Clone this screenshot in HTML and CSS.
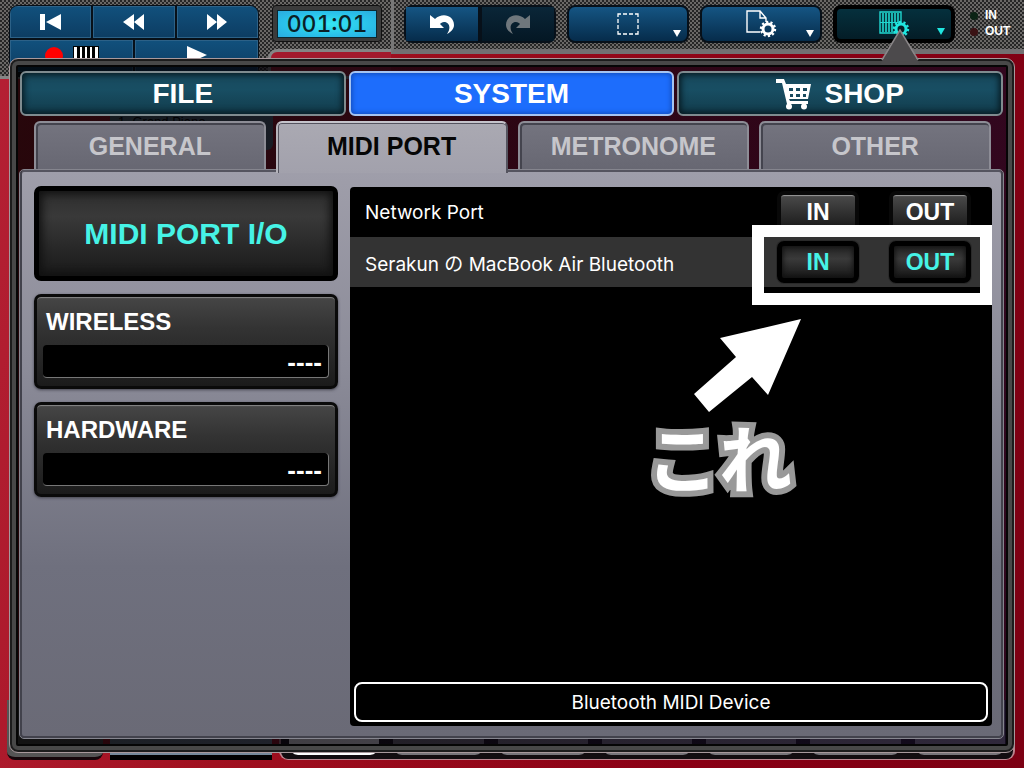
FILE: index.html
```html
<!DOCTYPE html>
<html lang="en">
<head>
<meta charset="utf-8">
<title>System – MIDI Port</title>
<link rel="stylesheet" href="styles.css">
</head>
<body>
<div class="app">
  <header class="topbar">
    <div class="deck deck-left">
      <div class="transport">
        <div class="transport-row">
          <button class="key" aria-label="Return to start"><svg width="22" height="18" viewBox="0 0 22 18"><path fill="#fff" d="M0 1h5v16H0zM21 1v16L6 9z"/></svg></button>
          <button class="key" aria-label="Rewind"><svg width="22" height="18" viewBox="0 0 22 18"><path fill="#fff" d="M11 1v16L0 9zM21 1v16L11 9z"/></svg></button>
          <button class="key" aria-label="Fast forward"><svg width="22" height="18" viewBox="0 0 22 18"><path fill="#fff" d="M1 1v16l10-8zM11 1v16l10-8z"/></svg></button>
        </div>
        <div class="transport-row">
          <button class="key" aria-label="Record"><svg width="54" height="20" viewBox="0 0 54 20"><circle cx="9" cy="10" r="9" fill="#f00"/><path fill="#000" d="M28 0h26v20H28z"/><path fill="#fff" d="M29 1h3v12h1v7h-4zM35 1h2v12h1v7h-4v-7h1zM40 1h2v12h1v7h-4v-7h1zM45 1h2v12h1v7h-4v-7h1zM50 1h3v19h-4v-7h1z"/></svg></button>
          <button class="key" aria-label="Play"><svg width="20" height="20" viewBox="0 0 20 20"><path fill="#fff" d="M0 0l20 9-20 9z"/></svg></button>
        </div>
      </div>
      <div class="counter-column">
        <div class="counter"><output class="counter-value">001:01</output></div>
        <div class="body-corner"></div>
      </div>
    </div>
    <div class="deck deck-right">
      <div class="history">
        <button class="tool" aria-label="Undo"><svg width="26" height="22" viewBox="0 0 26 22"><path fill="#fff" d="M1 2l5 4c7-7 19-4 19 6 0 4-3 7-7 9 4-5 3-12-3-12-2 0-3 1-4 2l4 4H1z"/></svg></button>
        <button class="tool tool-off" aria-label="Redo" disabled><svg width="26" height="22" viewBox="0 0 26 22"><path fill="#6f777c" d="M25 2l-5 4C13-1 1 2 1 12c0 4 3 7 7 9-4-5-3-12 3-12 2 0 3 1 4 2l-4 4h14z"/></svg></button>
      </div>
      <button class="tool tool-menu" aria-label="Selection">
        <svg width="24" height="24" viewBox="0 0 24 24"><path d="M2 5V2h3M19 2h3v3M22 19v3h-3M5 22H2v-3M7 2h4M13 2h4M7 22h4M13 22h4M2 7v4M2 13v4M22 7v4M22 13v4" fill="none" stroke="#fff" stroke-width="1.3"/></svg>
        <span class="caret"></span>
      </button>
      <button class="tool tool-menu" aria-label="Document settings">
        <svg width="32" height="30" viewBox="0 0 32 30"><path d="M15 23H2V2h13l6 7v4M15 2v7h6" fill="none" stroke="#fff" stroke-width="1.4"/><circle cx="23" cy="20" r="5" fill="none" stroke="#fff" stroke-width="3"/><circle cx="23" cy="20" r="7" fill="none" stroke="#fff" stroke-width="2.4" stroke-dasharray="2.2 2.2"/></svg>
        <span class="caret"></span>
      </button>
      <button class="tool tool-menu tool-active" aria-label="System settings" aria-expanded="true">
        <svg width="32" height="30" viewBox="0 0 32 30"><path d="M2 3h21v21H2z" fill="#06303a" stroke="#20d6d0" stroke-width="1.4"/><path d="M5 4v9M8 4v9M11 4v9M14 4v9M17 4v9M20 4v9M5 14v9M8 14v9M11 14v9M14 14v9" stroke="#20d6d0" stroke-width="1.6"/><path d="M2 13.500h21" stroke="#20d6d0"/><circle cx="23" cy="20" r="5" fill="#062028" stroke="#20e6e0" stroke-width="3"/><circle cx="23" cy="20" r="7" fill="none" stroke="#20e6e0" stroke-width="2.4" stroke-dasharray="2.2 2.2"/></svg>
        <span class="caret"></span>
      </button>
      <ul class="lamps">
        <li class="lamp lamp-in">IN</li>
        <li class="lamp lamp-out">OUT</li>
      </ul>
    </div>
  </header>

  <div class="stage"><div class="part">1&nbsp; Grand Piano</div></div>
  <div class="keybed">
    <div class="wheel"></div>
    <div class="pad"></div>
    <div class="keys"><i class="ivory"></i><i></i><i></i><i></i><i></i><i></i><i></i></div>
  </div>

  <section class="popover" aria-label="System settings">
    <svg class="pointer" width="40" height="36" viewBox="0 0 40 36"><path d="M0 36L20 1l20 35z" fill="#4c4a4c"/><path d="M2 31L20 1l18 30" fill="none" stroke="#8a8688" stroke-width="1.500"/></svg>
    <nav class="segments">
      <button class="segment">FILE</button>
      <button class="segment segment-on">SYSTEM</button>
      <button class="segment"><svg width="36" height="32" viewBox="0 0 36 32"><path d="M0 1h8l2 5h25l-3 15H13l1 2h18v3H11L6 5H0z" fill="#fff"/><path d="M13 10h4v3h-4zM20 10h4v3h-4zM27 10h4v3h-4zM14 16h3v3h-3zM20 16h4v3h-4zM27 16h3v3h-3z" fill="#194a5e"/><circle cx="13" cy="28.500" r="3" fill="#fff"/><circle cx="28" cy="28.500" r="3" fill="#fff"/></svg>SHOP</button>
    </nav>
    <div class="tabs" role="tablist">
      <button class="tab" role="tab">GENERAL</button>
      <button class="tab tab-on" role="tab" aria-selected="true">MIDI PORT</button>
      <button class="tab" role="tab">METRONOME</button>
      <button class="tab" role="tab">OTHER</button>
    </div>
    <div class="panel" role="tabpanel">
      <div class="side">
        <button class="block block-on">MIDI PORT I/O</button>
        <button class="block block-field"><span class="block-name">WIRELESS</span><span class="block-value">----</span></button>
        <button class="block block-field"><span class="block-name">HARDWARE</span><span class="block-value">----</span></button>
      </div>
      <div class="ports">
        <div class="port">
          <span class="port-name">Network Port</span>
          <button class="switch" aria-pressed="false">IN</button>
          <button class="switch" aria-pressed="false">OUT</button>
        </div>
        <div class="port port-alt">
          <span class="port-name">Serakun の MacBook Air Bluetooth</span>
          <button class="switch" aria-pressed="true">IN</button>
          <button class="switch" aria-pressed="true">OUT</button>
        </div>
        <button class="device">Bluetooth MIDI Device</button>
        <div class="callout-frame"></div>
        <div class="callout">
          <svg width="108" height="94" viewBox="0 0 108 94"><path d="M108 0L27 19l16 19L1 75l15 18 43-35 16 18z" fill="#fff"/></svg>
          <span class="callout-text" lang="ja">これ</span>
        </div>
      </div>
    </div>
  </section>
</div>
</body>
</html>
```
FILE: styles.css
```css
* { box-sizing: border-box; }

body {
  margin: 0;
  font-family: "Liberation Sans", Arial, sans-serif;
  color: #fff;
}

button {
  margin: 0;
  padding: 0;
  border: 0;
  font: inherit;
  color: inherit;
  background: none;
}

svg { display: block; }

.app {
  position: relative;
  display: flex;
  flex-direction: column;
  min-height: 100vh;
  overflow: hidden;
  background: linear-gradient(100deg, #b52034 0, #a0101f 30%, #8a0015 70%, #7c0013 100%);
}

/* Top bar */
.topbar {
  display: flex;
  align-items: flex-start;
  height: 80px;
}

.deck {
  display: flex;
  background-color: #6a6866;
  background-image:
    radial-gradient(circle at 1px 1px, #262626 1px, transparent 1px),
    radial-gradient(circle at 3px 3px, #262626 1px, transparent 1px);
  background-size: 4px 4px;
}

.deck-left {
  flex: none;
  width: 391px;
  height: 79px;
  padding: 5px 0 0 9px;
  gap: 9px;
  border-bottom: 3px solid #858585;
}

.transport {
  display: flex;
  flex-direction: column;
  gap: 2px;
  width: 250px;
  height: 72px;
  border: 1px solid #071019;
  border-radius: 9px;
  overflow: hidden;
  background: #071019;
}

.transport-row {
  display: flex;
  gap: 2px;
  height: 32px;
}

.key {
  display: flex;
  flex: 1;
  align-items: center;
  justify-content: center;
  border: 1px solid #2c6187;
  background: linear-gradient(#11507c, #0d3d63);
}

.counter-column {
  display: flex;
  flex: 1;
  flex-direction: column;
  gap: 7px;
}

.counter {
  height: 37px;
  margin: 0 9px 0 4px;
  padding: 4px;
  border: 1px solid #111;
  border-radius: 4px;
  background: #3b3b3b;
}

.counter-value {
  display: block;
  height: 28px;
  border: 1px solid #0b2730;
  background: radial-gradient(ellipse at center, #35e9f2 0, #2ac2ea 60%, #2babdf 100%);
  color: #0b1f26;
  font: 500 23px/27px Inter, sans-serif;
  font-variant-numeric: tabular-nums;
  text-align: center;
}

.body-corner {
  flex: 1;
  border: solid #858585;
  border-width: 3px 0 0 3px;
  border-radius: 9px 0 0 0;
  background: #a31a2d;
}

.deck-right {
  flex: 1;
  align-items: flex-start;
  gap: 11px;
  height: 54px;
  padding: 5px 0 0 10px;
  border-left: 3px solid #777;
  border-bottom: 5px solid #727072;
}

.history {
  display: flex;
  width: 152px;
  border-radius: 8px;
  overflow: hidden;
}

.tool {
  position: relative;
  display: flex;
  flex: 1;
  align-items: center;
  justify-content: center;
  height: 38px;
  border: 2px solid #071019;
  background: linear-gradient(#155583, #062c4b);
}

.tool-off { background: linear-gradient(#0a2638, #041724); }

.tool-menu {
  flex: none;
  width: 122px;
  border-radius: 8px;
}

.tool-active {
  border: 4px solid #000;
  background: linear-gradient(#05303d, #041d27);
  color: #20e6e0;
}

.caret {
  position: absolute;
  right: 6px;
  bottom: 4px;
  border: solid transparent;
  border-width: 7px 4px 0;
  border-top-color: currentColor;
}

.lamps {
  display: flex;
  flex-direction: column;
  gap: 1px;
  margin: 3px 0 0 4px;
  padding: 0;
  list-style: none;
}

.lamp {
  display: flex;
  align-items: center;
  gap: 7px;
  font-size: 12px;
  font-weight: bold;
  line-height: 15px;
}

.lamp::before {
  content: "";
  width: 8px;
  height: 8px;
  border-radius: 50%;
  background: #0c2415;
}

.lamp-out::before { background: #3a1214; }

/* Instrument face behind the popover */
.stage {
  display: flex;
  flex: 1;
  padding: 0 0 0 110px;
}

.part {
  width: 163px;
  height: 70px;
  padding: 34px 8px 0;
  border-radius: 0 0 6px 0;
  background: #55707f;
  color: #000;
  font-size: 13px;
  line-height: 16px;
}

.keybed {
  display: flex;
  gap: 7px;
  height: 60px;
  margin: 0 9px 8px 7px;
}

.wheel {
  width: 96px;
  height: 60px;
  border-radius: 0 0 8px 8px;
  border-bottom: 3px solid #16060a;
  background: #555;
}

.pad {
  width: 162px;
  border-bottom: 5px solid #000;
  background: #75889a;
}

.keys {
  display: flex;
  flex: 1;
  gap: 14px;
  padding: 0 8px 4px;
  border: solid #b9868f;
  border-width: 0 2px 1px;
  border-radius: 0 0 9px 9px;
  background: #120d10;
}

.keys i {
  flex: 1;
  border-radius: 0 0 9px 9px;
  background: #77757a;
}

.keys .ivory { background: #fff; }

/* Popover */
.popover {
  position: absolute;
  inset: 58px 9px 15px 9px;
  display: flex;
  flex-direction: column;
  padding: 12px 11px 14px 10px;
  border: 1px solid #a8999c;
  border-radius: 9px;
  background: linear-gradient(90deg, rgba(0, 0, 0, .78), rgba(20, 10, 35, .72));
  box-shadow:
    inset 0 0 0 2px #1c1c1c,
    inset 0 0 0 6px #484848,
    inset 0 0 0 8px #050505;
}

.pointer {
  position: absolute;
  top: -30px;
  right: 94px;
}

.segments {
  display: grid;
  grid-template-columns: repeat(3, 1fr);
  gap: 3px;
}

.segment {
  display: flex;
  align-items: center;
  justify-content: center;
  gap: 12px;
  height: 45px;
  border: 2px solid #7f8b8f;
  border-radius: 6px;
  background: linear-gradient(#18495d, #184e63 40%, #123c4c);
  box-shadow: inset 0 0 6px 2px #06181f;
  font-size: 28px;
  font-weight: bold;
}

.segment-on {
  border-color: #a5c4f2;
  background: #1d6dfc;
  box-shadow: inset 0 0 5px 1px #134bb8;
}

.tabs {
  display: grid;
  grid-template-columns: repeat(4, 1fr);
  gap: 10px;
  margin-top: 5px;
  padding: 0 12px 0 14px;
}

.tab {
  height: 49px;
  border: 2px solid #8d8d96;
  border-bottom: 0;
  border-radius: 6px 6px 0 0;
  background: linear-gradient(#74747f, #676772);
  box-shadow: inset 1px 1px 0 1px #44444e;
  color: #c6c6cb;
  font-size: 25px;
  font-weight: bold;
}

.tab-on {
  z-index: 1;
  height: 52px;
  margin-bottom: -3px;
  padding-bottom: 3px;
  border-color: #c5c4cb #55545f #c5c4cb #b5b4bb;
  background: linear-gradient(#aaa9b2, #a2a1ac);
  box-shadow: inset 0 2px 0 -1px #55545f, inset 1px 0 0 #55545f;
  color: #060606;
}

.panel {
  display: grid;
  flex: 1;
  grid-template-columns: 304fr 642fr;
  gap: 12px;
  padding: 14px 9px 10px 12px;
  border: 2px solid #42424c;
  border-top-color: #55545f;
  border-radius: 4px;
  outline: 1px solid #85858e;
  background: linear-gradient(#9f9eaa, #8b8b98 35%, #6f707e 70%, #6a6a76);
}

.side {
  display: flex;
  flex-direction: column;
  gap: 13px;
}

.block {
  height: 95px;
  border: 3px solid #0a0a0a;
  border-radius: 7px;
  background: linear-gradient(#464646, #333 35%, #1b1b1b);
  box-shadow: 0 1px 3px #44444f, inset 0 2px 1px -1px #888;
  font-weight: bold;
}

.block-on {
  border-width: 5px;
  border-color: #000;
  background: linear-gradient(#2e2e2e, #393939 30%, #191919);
  box-shadow: inset 0 0 9px 3px #111;
  color: #46f3e6;
  font-size: 30px;
}

.block-field {
  display: flex;
  flex-direction: column;
  justify-content: space-between;
  padding: 12px 6px 8px;
  text-align: left;
}

.block-name {
  padding-left: 3px;
  font-size: 24px;
  line-height: 26px;
}

.block-value {
  height: 33px;
  padding: 0 6px;
  border: solid #777;
  border-width: 0 1px 1px 0;
  border-radius: 4px;
  background: #000;
  font-size: 26px;
  line-height: 34px;
  text-align: right;
}

.ports {
  position: relative;
  display: flex;
  flex-direction: column;
  margin-top: 1px;
  border-radius: 4px;
  background: #000;
  font-family: Inter, "Noto Sans CJK JP", sans-serif;
  font-size: 19px;
}

.port {
  display: flex;
  align-items: center;
  gap: 30px;
  height: 50px;
  padding: 0 21px 0 15px;
}

.port-alt { background: #333; }

.port-name { flex: 1; }

.switch {
  width: 82px;
  height: 42px;
  border: 4px solid #080808;
  border-radius: 7px;
  background: linear-gradient(#4a4a4a, #191919);
  box-shadow: inset 0 2px 1px -1px #999;
  font-family: "Liberation Sans", Arial, sans-serif;
  font-size: 23px;
  font-weight: bold;
}

.switch[aria-pressed="true"] {
  border: 5px solid #000;
  background: linear-gradient(#222, #3a3a3a 40%, #161616);
  box-shadow: inset 0 0 5px 1px #111, 0 0 0 1px #292929;
  color: #46f3e6;
}

.device {
  height: 40px;
  margin: auto 4px 4px;
  border: 2px solid #fff;
  border-radius: 8px;
}

/* Annotation over the port list */
.callout-frame {
  position: absolute;
  top: 38px;
  right: 0;
  width: 240px;
  height: 80px;
  border: 12px solid #fff;
}

.callout {
  position: absolute;
  top: 132px;
  right: 191px;
  display: flex;
  flex-direction: column;
  align-items: flex-end;
  pointer-events: none;
}

.callout-text {
  color: #fff;
  margin-right: 9px;
  font: bold 73px/84px "Noto Sans CJK JP", sans-serif;
  paint-order: stroke fill;
  -webkit-text-stroke: 12px #999;
}
```
